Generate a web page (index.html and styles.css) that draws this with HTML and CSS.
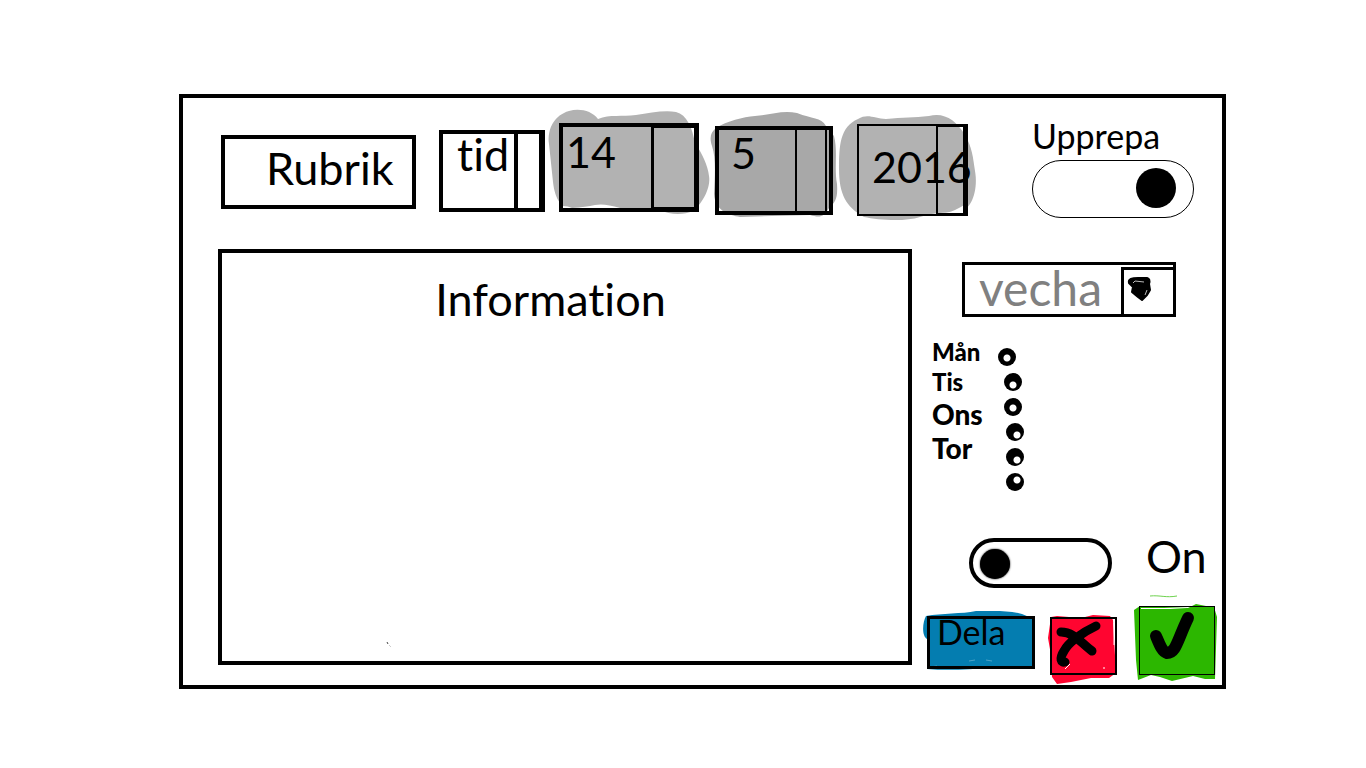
FILE: index.html
```html
<!DOCTYPE html>
<html lang="sv">
<head>
<meta charset="utf-8">
<title>Rubrik</title>
<link rel="stylesheet" href="styles.css">
</head>
<body>
<form class="frame">
  <header class="top">
    <input class="title" type="text" value="Rubrik" aria-label="Rubrik">
    <div class="field time">
      <select aria-label="Tid"><option>tid</option></select>
      <span class="divider"></span>
    </div>
    <div class="field day">
      <svg class="paint" width="167" height="117" viewBox="545 105 167 117" aria-hidden="true"><path fill="#b2b2b2" d="M598 119C592 111 580 108 569 111C555 115 547 128 549 144L553 182C555 200 562 210 577 212L660 210C670 215 684 215 693 211C703 203 711 187 709 176C708 166 702 153 695 143C692 127 687 115 676 112C664 110 650 113 636 115C622 117 610 114 598 119Z"/><path fill="#fff" d="M563 206Q568 206 572 208Q586 207 595 205Q604 203 620 208V209H563Z"/></svg>
      <select aria-label="Dag"><option>14</option></select>
      <span class="divider"></span>
    </div>
    <div class="field month">
      <svg class="paint" width="132" height="112" viewBox="708 108 132 112" aria-hidden="true"><path fill="#a8a8a8" d="M716 128C727 121 743 117 755 116C770 115 782 110 797 113C812 119 821 117 826 126L834 136C838 151 834 168 837 184C838 199 835 202 829 208C824 217 820 218 810 215L740 217C729 215 715 211 714 194C715 174 716 158 712 146C709 137 711 132 716 128Z"/></svg>
      <select aria-label="Månad"><option>5</option></select>
      <span class="divider"></span>
    </div>
    <div class="field year">
      <svg class="paint" width="144" height="112" viewBox="835 110 144 112" aria-hidden="true"><path fill="#b2b2b2" d="M858 119C868 113 875 119 886 119C903 117 914 118 929 116C944 112 956 120 965 135C972 147 973 157 975 171C978 188 973 205 964 210C950 214 936 211 920 217C905 222 878 220 864 217C846 207 839 194 839 169C839 145 840 127 858 119Z"/><path fill="#fff" d="M946 213Q957 210 964 205V213Z"/></svg>
      <select aria-label="År"><option>2016</option></select>
      <span class="divider"></span>
    </div>
    <div class="repeat">
      <label for="repeat">Upprepa</label>
      <input id="repeat" class="switch thin" type="checkbox" checked>
    </div>
  </header>

  <div class="content">
    <div class="info">
      <textarea aria-label="Information">Information</textarea>
      <svg class="speck" width="6" height="6" viewBox="0 0 6 6" aria-hidden="true"><path d="M1 1L2 3" fill="none" stroke="#444"/><path d="M3 4L5 6" fill="none" stroke="#ccc"/></svg>
    </div>

    <aside class="side">
      <div class="period">
        <select aria-label="Period"><option>vecha</option></select>
        <span class="arrow"><svg width="46" height="42" viewBox="0 0 46 42" aria-hidden="true"><path d="M5 13C4 9 8 8 14 8L23 8C26 9 26 11 25 14L26 20L23 25L18 30L14 27L8 22L9 17Z" stroke="#000" stroke-linejoin="round" stroke-width="2"/><path d="M9 13L11 11L20 12M23 20L21 25" fill="none" stroke="#bbb"/></svg></span>
      </div>

      <fieldset class="days">
        <div class="names">
          <label for="d1">Mån</label>
          <label for="d2">Tis</label>
          <label class="large" for="d3">Ons</label>
          <label class="large" for="d4">Tor</label>
        </div>
        <div class="dots">
          <input id="d1" type="radio" name="day" aria-label="Måndag">
          <input id="d2" class="low" type="radio" name="day" aria-label="Tisdag">
          <input id="d3" type="radio" name="day" aria-label="Onsdag">
          <input id="d4" class="low right" type="radio" name="day" aria-label="Torsdag">
          <input id="d5" class="low right" type="radio" name="day" aria-label="Fredag">
          <input id="d6" class="high right" type="radio" name="day" aria-label="Lördag">
        </div>
      </fieldset>

      <div class="power">
        <input id="on" class="switch thick" type="checkbox">
        <label for="on">On</label>
      </div>

      <div class="actions">
        <button class="share" type="button">
          <svg class="paint" width="120" height="66" viewBox="920 608 120 66" aria-hidden="true"><path fill="#047db0" d="M926 616C942 613 962 614 976 611C994 611 1009 610 1022 614L1034 619V667L990 668C970 669 950 671 927 669V639C921 635 923 621 926 616Z"/><path fill="none" stroke="#4fa3c6" d="M969 661L975 660M986 660L992 661M930 667L937 666"/></svg>
          <span>Dela</span>
        </button>
        <button class="cancel" type="button" aria-label="Avbryt">
          <svg class="paint" width="72" height="74" viewBox="1046 612 72 74" aria-hidden="true"><path fill="#ff0530" d="M1050 617L1056 616L1080 618L1092 615L1109 616L1112 620L1115 673L1108 678L1090 678L1070 682L1056 684L1051 677L1050 655L1047 638Z"/><path fill="none" stroke="#000" stroke-width="9" stroke-linecap="round" stroke-linejoin="round" d="M1060 632C1073 632 1080 643 1091 651M1095 626C1080 633 1067 643 1063 651C1058 659 1060 663 1064 662"/><path fill="none" stroke="#fff" stroke-width="1" d="M1113 623V645M1069 664L1064 669M1103 667V669"/></svg>
        </button>
        <button class="save" type="button" aria-label="Spara">
          <svg class="paint" width="86" height="90" viewBox="1132 594 86 90" aria-hidden="true"><path fill="#2cb700" d="M1134 610L1140 606L1188 608L1196 604L1206 606L1214 607L1217 617L1215 679L1205 679L1193 676L1172 681L1160 677L1151 675L1138 680L1136 660Z"/><path fill="#fff" d="M1141 608H1187L1170 609H1141Z"/><path fill="none" stroke="#6ed24e" d="M1150 596C1160 595 1166 598 1177 596"/><path fill="none" stroke="#000" stroke-width="12" stroke-linecap="round" stroke-linejoin="round" d="M1156 636C1159 643 1162 652 1167 653C1176 653 1177 641 1188 618"/></svg>
        </button>
      </div>
    </aside>
  </div>
</form>
</body>
</html>
```
FILE: styles.css
```css
* {
  box-sizing: border-box;
}

body {
  display: flex;
  min-height: 100vh;
  margin: 0;
  padding: 94px 140px 79px 179px;
  background: #fff;
  color: #000;
  font: 45px/54px Lato, "Open Sans", sans-serif;
  font-variant-ligatures: none;
}

input,
select,
textarea,
button {
  margin: 0;
  padding: 0;
  border: 0;
  border-radius: 0;
  appearance: none;
  background: none;
  color: inherit;
  font: inherit;
  font-variant-ligatures: none;
}

.frame {
  display: flex;
  flex: 1;
  flex-direction: column;
  min-width: 960px;
  border: 4px solid #000;
}

.top {
  display: flex;
  align-items: flex-start;
  min-height: 151px;
  padding: 25px 28px 0 38px;
}

.title {
  flex: 1;
  min-width: 0;
  height: 74px;
  margin-top: 12px;
  padding: 0 0 8px 41px;
  border: 4px solid #000;
}

.field {
  position: relative;
  display: flex;
  flex: none;
  border: 4px solid #000;
}

.field select {
  flex: none;
  width: 100%;
  height: 40px;
  line-height: 40px;
}

.paint {
  position: absolute;
  z-index: -1;
}

.divider {
  position: absolute;
  top: 0;
  right: 0;
  bottom: 0;
  border: solid #000;
  border-width: 0 2px 0 4px;
}

.time {
  width: 106px;
  height: 82px;
  margin: 7px 0 0 23px;
}

.time select {
  padding-left: 14px;
}

.time .divider {
  width: 27px;
}

.day {
  width: 140px;
  height: 89px;
  margin-left: 14px;
}

.day .paint {
  top: -22px;
  left: -18px;
}

.day select {
  margin-top: 5px;
  padding-left: 3px;
  font-size: 43px;
}

.day .divider {
  width: 44px;
  border-width: 1px 1px 1px 3px;
}

.month {
  width: 118px;
  height: 89px;
  margin: 3px 0 0 16px;
}

.month .paint {
  top: -22px;
  left: -11px;
}

.month select {
  margin-top: 3px;
  padding-left: 12px;
  font-size: 43px;
}

.month .divider {
  right: 2px;
  width: 32px;
  border-width: 0 2px;
}

.year {
  width: 111px;
  height: 92px;
  margin: 1px 0 0 24px;
  border-width: 2px;
}

.year .paint {
  top: -16px;
  left: -24px;
}

.year select {
  width: 120px;
  margin-top: 21px;
  padding-left: 13px;
  font-size: 43px;
}

.year .divider {
  width: 30px;
  border-width: 1px 3px 1px 2px;
}

.repeat {
  display: flex;
  flex: none;
  flex-direction: column;
  width: 162px;
  margin-left: 64px;
  font-size: 34px;
  line-height: 26px;
}

.repeat label {
  padding-bottom: 11px;
}

.switch {
  flex: none;
  border: solid #000;
}

.switch::before {
  display: block;
  border-radius: 50%;
  background: #000;
  content: "";
}

.thin {
  height: 58px;
  padding: 7px 17px;
  border-width: 1px;
  border-radius: 29px;
}

.thin::before {
  width: 40px;
  height: 40px;
  margin-left: auto;
}

.thick {
  width: 143px;
  height: 50px;
  padding: 7px;
  border-width: 4px;
  border-radius: 25px;
}

.thick::before {
  width: 30px;
  height: 30px;
  box-shadow: 0 0 2px #000;
}

.content {
  display: flex;
  flex: 1;
  padding: 0 8px 20px 35px;
}

.info {
  position: relative;
  display: flex;
  flex: 1;
}

.info textarea {
  flex: 1;
  width: 100%;
  padding: 19px 29px 0 0;
  border: 4px solid #000;
  resize: none;
  text-align: center;
}

.speck {
  position: absolute;
  bottom: 18px;
  left: 168px;
}

.side {
  display: flex;
  flex: none;
  flex-direction: column;
  width: 302px;
}

.period {
  display: flex;
  width: 214px;
  height: 55px;
  margin: 13px 0 0 50px;
  border: 3px solid #000;
}

.period select {
  flex: 1;
  height: 46px;
  padding-left: 14px;
  color: #808080;
  font-size: 48px;
  line-height: 46px;
}

.arrow {
  display: flex;
  flex: none;
  width: 52px;
  margin-top: 2px;
  border: solid #000;
  border-width: 3px 0 0 3px;
}

.days {
  display: flex;
  justify-content: space-between;
  width: 92px;
  margin: 20px 0 0 20px;
  padding: 0;
  border: 0;
}

.names {
  display: flex;
  flex-direction: column;
  width: 64px;
  font-size: 24px;
  font-weight: 900;
  line-height: 30px;
}

.names .large {
  font-size: 28px;
  line-height: 34px;
}

.dots {
  display: flex;
  flex: none;
  flex-direction: column;
  gap: 7px;
  width: 28px;
  padding: 11px 0 0 8px;
}

.dots input {
  flex: none;
  width: 18px;
  height: 18px;
  border-radius: 50%;
  background: radial-gradient(circle at var(--x, 9px) var(--y, 10px), #fff 3px, #000 4px);
}

.dots input:first-child {
  margin-left: -6px;
}

.dots .low {
  --y: 12px;
}

.dots .high {
  --y: 7px;
}

.dots .right {
  --x: 11px;
  margin-left: 2px;
}

.power {
  display: flex;
  align-items: center;
  gap: 34px;
  margin: auto 0 0 57px;
}

.power label {
  padding-bottom: 14px;
}

.actions {
  display: flex;
  align-items: flex-start;
  justify-content: space-between;
  height: 52px;
  margin: 16px -1px 0 15px;
}

.actions button {
  position: relative;
  flex: none;
  border: 3px solid #000;
}

.actions .share {
  display: flex;
  width: 108px;
  height: 53px;
  margin-top: 3px;
  padding-left: 7px;
  font-size: 34px;
  line-height: 26px;
}

.share .paint {
  top: -11px;
  left: -10px;
}

.actions .cancel {
  width: 67px;
  height: 58px;
  margin-top: 4px;
  border-width: 2px;
}

.cancel .paint {
  top: -7px;
  left: -5px;
}

.actions .save {
  width: 76px;
  height: 69px;
  margin: -7px 0 0 8px;
  border-width: 1px;
}

.save .paint {
  top: -13px;
  left: -8px;
}
```
